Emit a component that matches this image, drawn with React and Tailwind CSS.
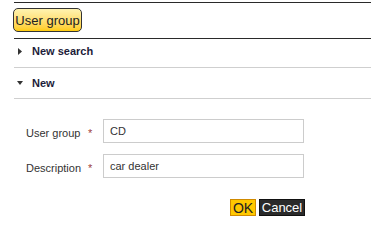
export default function App() {
  return (
    <div className="w-[371px] h-[244px] bg-white overflow-hidden" style={{ fontFamily: '"Liberation Sans", Arial, sans-serif' }}>
      <div className="pl-[14px] pt-[2px]">
        <div className="border-t border-b border-[#2a2a2a] h-[37px] relative">
          <div className="absolute left-[-1px] top-[5px] h-[24px] w-[69px] rounded-[5px] border border-[#333] bg-gradient-to-b from-[#fff3b0] to-[#ffcc00] flex items-center justify-center text-[13px] text-[#222] leading-none">
            User group
          </div>
        </div>
        <div className="h-[29px] border-b border-[#cfcfcf] flex items-center pb-[3px]">
          <svg width="4" height="7" viewBox="0 0 4 7" className="ml-[4px] mr-[10px]"><path d="M0 0 L4 3.5 L0 7 Z" fill="#333" /></svg>
          <span className="text-[11px] font-bold text-[#1c1c3a]">New search</span>
        </div>
        <div className="h-[31px] border-b border-[#cfcfcf] flex items-center">
          <svg width="6" height="4" viewBox="0 0 6 4" className="ml-[3px] mr-[9px]"><path d="M0 0 L6 0 L3 4 Z" fill="#333" /></svg>
          <span className="text-[11px] font-bold text-[#1c1c3a]">New</span>
        </div>
      </div>
      <div className="pl-[26px] pt-[20px]">
        <div className="flex items-center h-[24px]">
          <span className="w-[62px] shrink-0 whitespace-nowrap text-[11px] text-[#333] pt-[4px]">User group</span>
          <span className="w-[15px] shrink-0 text-[11px] text-[#a04040] pt-[4px]">*</span>
          <div className="w-[201px] shrink-0 h-[24px] border border-[#ccc] flex items-center pl-[6px] text-[11px] text-[#333]">CD</div>
        </div>
        <div className="flex items-center h-[24px] mt-[11px]">
          <span className="w-[62px] shrink-0 whitespace-nowrap text-[11px] text-[#333] pt-[5px]">Description</span>
          <span className="w-[15px] shrink-0 text-[11px] text-[#a04040] pt-[5px]">*</span>
          <div className="w-[201px] shrink-0 h-[24px] border border-[#ccc] flex items-center pl-[6px] text-[11px] text-[#333]">car dealer</div>
        </div>
        <div className="flex justify-end w-[279px] mt-[21px] gap-[3px]">
          <div className="h-[17px] w-[26px] bg-[#ffc800] border border-[#d08a00] text-[14px] leading-none text-[#222] flex items-center justify-center">OK</div>
          <div className="h-[17px] w-[46px] bg-[#2a2a2a] border border-[#111] text-[13px] leading-none text-white flex items-center justify-center">Cancel</div>
        </div>
      </div>
    </div>
  );
}
